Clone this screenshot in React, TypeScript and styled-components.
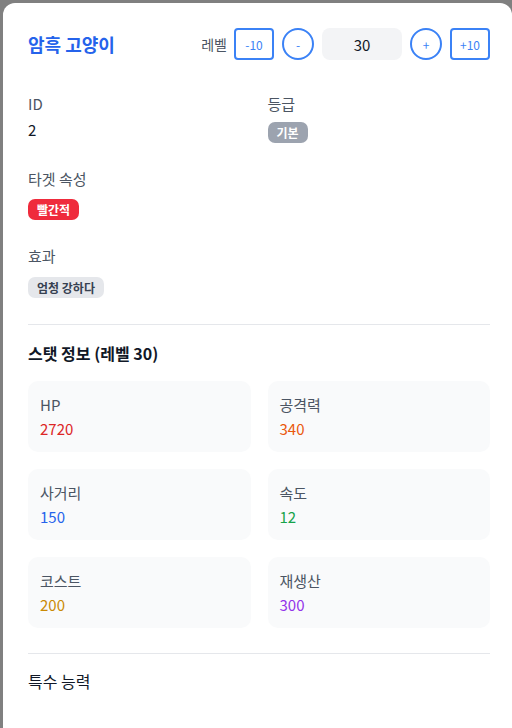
import { createGlobalStyle, styled } from "styled-components";

const GlobalStyle = createGlobalStyle`
  html, body {
    margin: 0;
    padding: 0;
    background: #808080;
    overflow: hidden;
  }
  body {
    font-family: "Noto Sans CJK KR", "Noto Sans", sans-serif;
    color: #111827;
  }
`;

const Modal = styled.div`
  margin: 3px 0 0 3px;
  width: 509px;
  min-height: 740px;
  box-sizing: border-box;
  background: #ffffff;
  border-radius: 12px;
  padding: 25px 22px 24px 25px;
`;

const Header = styled.div`
  display: flex;
  align-items: center;
  justify-content: space-between;
  margin-bottom: 34px;
`;

const Title = styled.h2`
  margin: 0;
  font-size: 18px;
  font-weight: 700;
  color: #2563eb;
`;

const Controls = styled.div`
  display: flex;
  align-items: center;
  gap: 8px;
`;

const LevelText = styled.span`
  font-size: 14px;
  color: #4b5563;
  margin-right: -1px;
`;

const StepButton = styled.button<{ $round?: boolean }>`
  box-sizing: border-box;
  height: 32px;
  width: ${(p) => (p.$round ? "32px" : "40px")};
  border: 2px solid #3b82f6;
  border-radius: ${(p) => (p.$round ? "50%" : "4px")};
  background: #ffffff;
  color: #3b82f6;
  font-family: inherit;
  font-size: 12px;
  padding: 0;
  display: flex;
  align-items: center;
  justify-content: center;
  cursor: pointer;
`;

const LevelInput = styled.input`
  box-sizing: border-box;
  width: 80px;
  height: 32px;
  border: 0;
  border-radius: 8px;
  background: #f3f4f6;
  text-align: center;
  font-family: inherit;
  font-size: 15px;
  color: #111827;
  outline: none;
`;

const Fields = styled.div`
  display: flex;
  flex-direction: column;
  gap: 26px;
`;

const TwoCol = styled.div`
  display: grid;
  grid-template-columns: 1fr 1fr;
  column-gap: 17px;
`;

const Label = styled.div`
  font-size: 15px;
  line-height: 20px;
  color: #4b5563;
`;

const Value = styled.div`
  margin-top: 4px;
  font-size: 15px;
  line-height: 24px;
  color: #111827;
`;

const BadgeRow = styled.div<{ $top?: number }>`
  display: flex;
  margin-top: ${(p) => p.$top ?? 10}px;
`;

const Badge = styled.span<{ $bg: string; $fg: string }>`
  display: inline-flex;
  align-items: center;
  height: 21px;
  padding: 0 9px;
  border-radius: 7px;
  background: ${(p) => p.$bg};
  color: ${(p) => p.$fg};
  font-size: 12px;
  font-weight: 700;
`;

const Divider = styled.hr<{ $top?: number }>`
  border: 0;
  border-top: 1px solid #e5e7eb;
  margin: ${(p) => p.$top ?? 26}px 0 0;
`;

const SectionTitle = styled.h3<{ $weight?: number; $top?: number }>`
  margin: ${(p) => p.$top ?? 17}px 0 0;
  font-size: 16px;
  line-height: 22px;
  font-weight: ${(p) => p.$weight ?? 700};
  color: #111827;
`;

const StatGrid = styled.div`
  display: grid;
  grid-template-columns: 1fr 1fr;
  gap: 17px;
  margin-top: 17px;
`;

const StatCard = styled.div`
  background: #f9fafb;
  border-radius: 10px;
  padding: 14px 12px 13px;
`;

const StatLabel = styled.div`
  font-size: 15px;
  line-height: 20px;
  color: #4b5563;
`;

const StatValue = styled.div<{ $color: string }>`
  margin-top: 4px;
  font-size: 15px;
  line-height: 20px;
  color: ${(p) => p.$color};
`;

const stats = [
  { label: "HP", value: 2720, color: "#dc2626" },
  { label: "공격력", value: 340, color: "#ea580c" },
  { label: "사거리", value: 150, color: "#2563eb" },
  { label: "속도", value: 12, color: "#16a34a" },
  { label: "코스트", value: 200, color: "#ca8a04" },
  { label: "재생산", value: 300, color: "#9333ea" },
];

export default function App() {
  return (
    <>
      <GlobalStyle />
      <Modal>
        <Header>
          <Title>암흑 고양이</Title>
          <Controls>
            <LevelText>레벨</LevelText>
            <StepButton>-10</StepButton>
            <StepButton $round>-</StepButton>
            <LevelInput value="30" readOnly />
            <StepButton $round>+</StepButton>
            <StepButton>+10</StepButton>
          </Controls>
        </Header>

        <Fields>
          <TwoCol>
            <div>
              <Label>ID</Label>
              <Value>2</Value>
            </div>
            <div>
              <Label>등급</Label>
              <BadgeRow $top={8}>
                <Badge $bg="#9ca3af" $fg="#ffffff">기본</Badge>
              </BadgeRow>
            </div>
          </TwoCol>
          <div>
            <Label>타겟 속성</Label>
            <BadgeRow>
              <Badge $bg="#ef2b3c" $fg="#ffffff">빨간적</Badge>
            </BadgeRow>
          </div>
          <div>
            <Label>효과</Label>
            <BadgeRow $top={11}>
              <Badge $bg="#e5e7eb" $fg="#374151">엄청 강하다</Badge>
            </BadgeRow>
          </div>
        </Fields>

        <Divider />
        <SectionTitle>스탯 정보 (레벨 30)</SectionTitle>
        <StatGrid>
          {stats.map((s) => (
            <StatCard key={s.label}>
              <StatLabel>{s.label}</StatLabel>
              <StatValue $color={s.color}>{s.value}</StatValue>
            </StatCard>
          ))}
        </StatGrid>

        <Divider $top={25} />
        <SectionTitle $weight={400} $top={16}>특수 능력</SectionTitle>
      </Modal>
    </>
  );
}
